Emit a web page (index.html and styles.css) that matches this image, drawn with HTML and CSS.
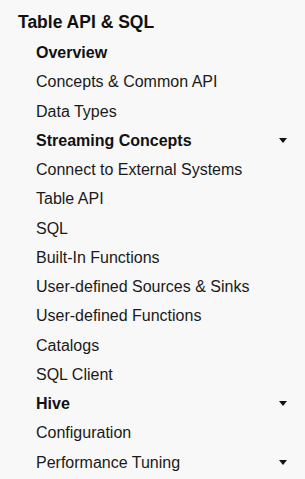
FILE: index.html
```html
<!DOCTYPE html>
<html>
<head>
<meta charset="utf-8">
<link rel="stylesheet" href="styles.css">
</head>
<body>
<nav class="sidebar">
  <div class="title">Table API &amp; SQL</div>
  <ul class="menu">
    <li class="item bold">Overview</li>
    <li class="item">Concepts &amp; Common API</li>
    <li class="item">Data Types</li>
    <li class="item bold has-caret">Streaming Concepts <span class="caret"></span></li>
    <li class="item">Connect to External Systems</li>
    <li class="item">Table API</li>
    <li class="item">SQL</li>
    <li class="item">Built-In Functions</li>
    <li class="item">User-defined Sources &amp; Sinks</li>
    <li class="item">User-defined Functions</li>
    <li class="item">Catalogs</li>
    <li class="item">SQL Client</li>
    <li class="item bold has-caret">Hive <span class="caret"></span></li>
    <li class="item">Configuration</li>
    <li class="item has-caret">Performance Tuning <span class="caret"></span></li>
  </ul>
</nav>
</body>
</html>
```
FILE: styles.css
```css
html, body {
  margin: 0;
  padding: 0;
  background: #f8f8f8;
}
body {
  font-family: "Liberation Sans", Arial, sans-serif;
  color: #111;
}
.sidebar {
  padding: 11px 0 0 18px;
}
.title {
  font-size: 17.5px;
  font-weight: bold;
  line-height: 22px;
  color: #111;
}
.menu {
  list-style: none;
  margin: 0;
  padding: 5px 0 0 18px;
}
.item {
  font-size: 16px;
  line-height: 29.25px;
  height: 29.25px;
  display: flex;
  align-items: center;
  justify-content: space-between;
  padding-right: 18px;
  color: #1a1a1a;
}
.bold {
  font-weight: bold;
  color: #111;
}
.caret {
  width: 0;
  height: 0;
  border-left: 4.5px solid transparent;
  border-right: 4.5px solid transparent;
  border-top: 5px solid #111;
}
```
